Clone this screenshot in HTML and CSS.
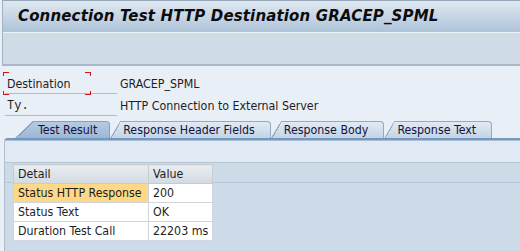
FILE: index.html
```html
<!DOCTYPE html>
<html lang="en">
<head>
<meta charset="utf-8">
<title>Connection Test HTTP Destination GRACEP_SPML</title>
<link rel="stylesheet" href="styles.css">
</head>
<body>
<div class="screen">
  <header class="head">
    <h1 class="title">Connection Test HTTP Destination GRACEP_SPML</h1>
    <div class="toolbar"></div>
  </header>

  <div class="fields">
    <div class="field-row">
      <span class="label focus">Destination</span>
      <span class="value">GRACEP_SPML</span>
    </div>
    <div class="field-row">
      <span class="label mono">Ty.</span>
      <span class="value">HTTP Connection to External Server</span>
    </div>
  </div>

  <div class="tabs">
    <div class="tab active"><span class="slant"></span><span class="tab-label">Test Result</span></div>
    <div class="tab"><span class="slant"></span><span class="tab-label">Response Header Fields</span></div>
    <div class="tab"><span class="slant"></span><span class="tab-label">Response Body</span></div>
    <div class="tab"><span class="slant"></span><span class="tab-label">Response Text</span></div>
  </div>

  <div class="panel">
    <div class="panel-top"></div>
    <div class="grid-area">
      <table class="grid">
        <thead>
          <tr><th class="c1">Detail</th><th class="c2">Value</th></tr>
        </thead>
        <tbody>
          <tr><td class="hl">Status HTTP Response</td><td>200</td></tr>
          <tr><td>Status Text</td><td>OK</td></tr>
          <tr><td>Duration Test Call</td><td>22203 ms</td></tr>
        </tbody>
      </table>
    </div>
  </div>
</div>
</body>
</html>
```

FILE: styles.css
```css
html, body {
  margin: 0;
  padding: 0;
}
body {
  background: #e9eff6;
  font-family: "DejaVu Sans Condensed", "Liberation Sans", sans-serif;
  font-size: 12.3px;
  color: #1e1e1e;
  width: 520px;
  height: 251px;
  overflow: hidden;
}
.screen {
  display: flex;
  flex-direction: column;
  height: 251px;
}

/* header */
.head {
  margin-left: 2px;
  border-left: 1px solid #a3b3c4;
  border-top: 1px solid #97a8ba;
}
.title {
  margin: 0;
  height: 31px;
  line-height: 31px;
  padding-left: 15px;
  font-family: "DejaVu Sans", sans-serif;
  font-size: 15px;
  letter-spacing: 0.15px;
  font-weight: bold;
  font-style: italic;
  color: #0c0c0c;
  background: linear-gradient(#dfe8f1, #aec3d9);
  border-bottom: 1px solid #eef3f8;
  white-space: nowrap;
}
.toolbar {
  height: 31px;
  background: #cfdce8;
  border-bottom: 2px solid #a9b9c9;
}

/* fields */
.fields {
  padding-top: 6px;
  display: flex;
  flex-direction: column;
}
.field-row {
  display: flex;
  height: 22px;
}
.label {
  position: relative;
  width: 112px;
  margin-left: 5px;
  box-sizing: border-box;
  height: 22px;
  padding: 4px 0 0 2px;
  line-height: 17px;
  border-bottom: 1px solid #b3bcc6;
}
.label.mono {
  font-family: "Liberation Mono", monospace;
  font-size: 12px;
}
.focus::after {
  content: "";
  position: absolute;
  left: -2px;
  top: 0;
  width: 88px;
  height: 23px;
  background:
    linear-gradient(#d41414, #d41414) left top / 6px 1px no-repeat,
    linear-gradient(#d41414, #d41414) left top / 1px 4px no-repeat,
    linear-gradient(#d41414, #d41414) right top / 6px 1px no-repeat,
    linear-gradient(#d41414, #d41414) right top / 1px 4px no-repeat,
    linear-gradient(#d41414, #d41414) left bottom / 6px 1px no-repeat,
    linear-gradient(#d41414, #d41414) left bottom / 1px 4px no-repeat,
    linear-gradient(#d41414, #d41414) right bottom / 6px 1px no-repeat,
    linear-gradient(#d41414, #d41414) right bottom / 1px 4px no-repeat;
}
.value {
  margin-left: 3px;
  padding-top: 4px;
  line-height: 17px;
  white-space: nowrap;
}

/* tabs */
.tabs {
  display: flex;
  height: 17px;
  margin-top: 5px;
  padding-left: 15px;
}
.tab {
  display: flex;
  height: 17px;
  color: #14143a;
}
.slant {
  width: 10px;
  clip-path: polygon(0 100%, 100% 0, 100% 100%);
  background:
    linear-gradient(to bottom right, transparent 50%, #92aac5 50%, #92aac5 calc(50% + 1.3px), transparent calc(50% + 1.3px)),
    linear-gradient(#e2eaf3, #c3d4e7);
}
.tab-label {
  padding: 0 15px 0 3px;
  line-height: 16px;
  border-top: 1px solid #92aac5;
  border-right: 1px solid #92aac5;
  border-top-right-radius: 4px;
  background: linear-gradient(#e2eaf3, #c3d4e7);
  white-space: nowrap;
}
.tab.active .slant {
  width: 18px;
  background:
    linear-gradient(to bottom right, transparent 50%, #86a0bf 50%, #86a0bf calc(50% + 1.3px), transparent calc(50% + 1.3px)),
    linear-gradient(#b6cbe3, #9cb7d6);
}
.tab.active .tab-label {
  padding: 0 12px 0 5px;
  border-color: #86a0bf;
  background: linear-gradient(#b6cbe3, #9cb7d6);
}

/* panel */
.panel {
  flex: 1;
  margin-left: 4px;
  border-left: 1px solid #b0bfcd;
  border-top: 2px solid #7797bc;
  border-top-left-radius: 4px;
  display: flex;
  flex-direction: column;
}
.panel-top {
  height: 22px;
  background: #dfeaf4;
  border-top: 1px solid #a9bfd6;
  box-sizing: border-box;
}
.grid-area {
  flex: 1;
  border-top: 1px solid #b7c4d1;
  background:
    linear-gradient(to bottom, transparent 19px, #b9c8d8 19px, #b9c8d8 20px, transparent 20px),
    #cddbe9;
  padding: 1px 0 0 8px;
}
.grid {
  border-collapse: collapse;
  width: 200px;
  table-layout: fixed;
}
.grid th,
.grid td {
  height: 18px;
  line-height: 18px;
  padding: 0 0 0 4px;
  text-align: left;
  font-weight: normal;
  white-space: nowrap;
  border: 1px solid #cfd6de;
  background: #fff;
  color: #1e1e1e;
}
.grid th {
  background: linear-gradient(#e9edf1, #d3dae2);
  border-color: #c4ccd5;
}
.grid th.c1 {
  width: 130px;
}
.grid td.hl {
  background: #fdd886;
}
```
